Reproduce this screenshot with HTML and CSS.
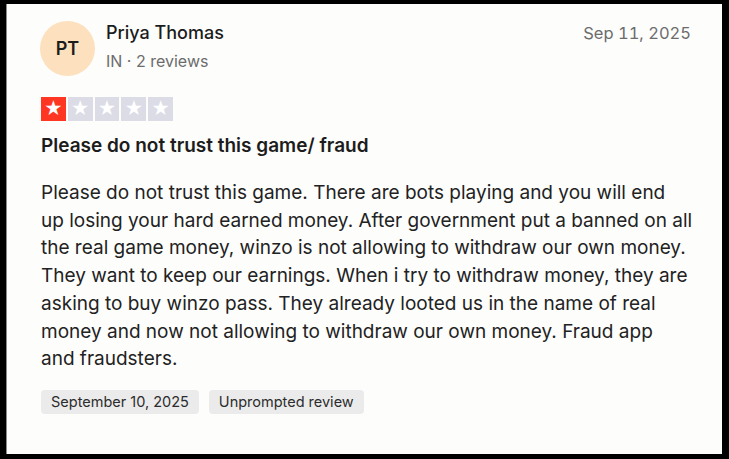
FILE: index.html
```html
<!DOCTYPE html>
<html lang="en">
<head>
    <meta charset="UTF-8">
    <meta name="viewport" content="width=device-width, initial-scale=1.0">
    <title>Review - Priya Thomas</title>
    <link rel="stylesheet" href="styles.css">
</head>
<body>
    <div class="card">
        <div class="review-header">
            <div class="avatar">PT</div>
            <div class="consumer">
                <div class="consumer-name">Priya Thomas</div>
                <div class="consumer-meta">IN &middot; 2 reviews</div>
            </div>
            <div class="review-date">Sep 11, 2025</div>
        </div>

        <div class="stars">
            <span class="star filled">&#9733;</span>
            <span class="star">&#9733;</span>
            <span class="star">&#9733;</span>
            <span class="star">&#9733;</span>
            <span class="star">&#9733;</span>
        </div>

        <h2 class="review-title">Please do not trust this game/ fraud</h2>

        <p class="review-text">Please do not trust this game. There are bots playing and you will end
up losing your hard earned money. After government put a banned on all
the real game money, winzo is not allowing to withdraw our own money.
They want to keep our earnings. When i try to withdraw money, they are
asking to buy winzo pass. They already looted us in the name of real
money and now not allowing to withdraw our own money. Fraud app
and fraudsters.</p>

        <div class="tags">
            <span class="tag">September 10, 2025</span>
            <span class="tag">Unprompted review</span>
        </div>
    </div>
</body>
</html>
```

FILE: styles.css
```css
body {
    font-family: Inter, "Noto Sans", sans-serif;
    margin: 0;
    background: #000;
    color: #1c1c1c;
}
.card {
    background: #fdfdfc;
    margin: 4px 7px 5px 6px;
    height: 450px;
    box-sizing: border-box;
    padding: 17px 31px 0 33px;
    border-left: 1px solid #8a8a8a;
}
.review-header {
    display: flex;
    align-items: flex-start;
}
.avatar {
    width: 55px;
    height: 55px;
    border-radius: 50%;
    background: #fde0bd;
    display: flex;
    align-items: center;
    justify-content: center;
    font-size: 18px;
    font-weight: 600;
    color: #1c1c1c;
    margin-right: 10px;
}
.consumer {
    flex: 1;
    padding-left: 1px;
}
.consumer-name {
    font-size: 18px;
    font-weight: 500;
    line-height: 24px;
}
.consumer-meta {
    font-size: 16px;
    color: #6c6c6c;
    line-height: 22px;
    margin-top: 5px;
}
.review-date {
    font-size: 16.5px;
    color: #6c6c6c;
    line-height: 24px;
    font-variant-numeric: tabular-nums;
}
.stars {
    display: flex;
    gap: 2px;
    margin-top: 21px;
    padding-left: 1px;
}
.star {
    width: 24.8px;
    height: 24px;
    background: #dcdce6;
    color: #fff;
    font-size: 18px;
    line-height: 24px;
    text-align: center;
}
.star.filled {
    background: #ff3722;
}
.review-title {
    font-size: 19px;
    font-weight: 600;
    margin: 13px 0 0 1px;
    line-height: 24px;
}
.review-text {
    font-size: 19px;
    line-height: 27.7px;
    margin: 21px 0 0 1px;
    white-space: pre;
    color: #222;
}
.tags {
    display: flex;
    gap: 10px;
    margin-top: 17px;
    padding-left: 1px;
}
.tag {
    background: #ebebeb;
    border-radius: 4px;
    font-size: 14.5px;
    line-height: 24px;
    padding: 0 10px;
    color: #2c2c2c;
}
```
